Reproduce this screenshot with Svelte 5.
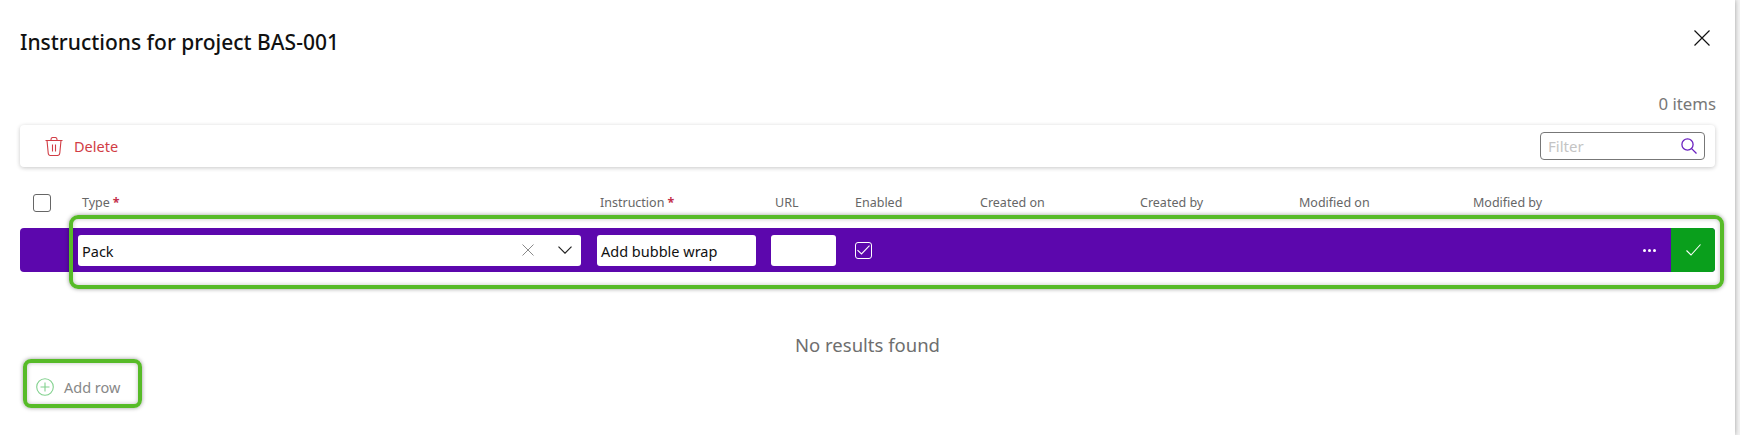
<script>
  const columns = [
    { label: 'Type', required: true },
    { label: 'Instruction', required: true },
    { label: 'URL' },
    { label: 'Enabled' },
    { label: 'Created on' },
    { label: 'Created by' },
    { label: 'Modified on' },
    { label: 'Modified by' }
  ]
</script>

<div class="dialog">
  <div class="title-row">
    <h1>Instructions for project BAS-001</h1>
    <svg class="close" width="16" height="16" viewBox="0 0 16 16" fill="none" stroke="#111" stroke-width="1.2">
      <path d="M.5.5l15 15M15.500.5l-15 15" />
    </svg>
  </div>

  <div class="count">0 items</div>

  <div class="toolbar">
    <svg class="trash" width="18" height="19" viewBox="0 0 18 19" fill="none" stroke="#d13d45" stroke-width="1.1">
      <path d="M.5 3.500h17M2 3.500l1.200 12.500a2.500 2.500 0 0 0 2.500 2.500h6.600a2.500 2.500 0 0 0 2.500-2.500L16 3.500M6 3.500V2.500a2 2 0 0 1 2-2h2a2 2 0 0 1 2 2v1M7.500 7.500v7M10.500 7.500v7" />
    </svg>
    <span class="delete">Delete</span>
    <div class="filter">
      <span>Filter</span>
      <svg width="16" height="16" viewBox="0 0 16 16" fill="none" stroke="#6b22c0" stroke-width="1.300">
        <circle cx="6.500" cy="6.500" r="5.600" />
        <path d="M10.600 10.600L15.500 15.500" />
      </svg>
    </div>
  </div>

  <div class="head">
    <div class="head-check"><span class="box"></span></div>
    {#each columns as col}
      <div class="col">{col.label}{#if col.required}<span class="star">*</span>{/if}</div>
    {/each}
  </div>

  <div class="row">
    <div class="input type">
      <span class="value">Pack</span>
      <svg class="clear" width="12" height="12" viewBox="0 0 12 12" fill="none" stroke="#8a8a8a" stroke-width="1">
        <path d="M.5.500l11 11M11.500.500l-11 11" />
      </svg>
      <svg class="chevron" width="14" height="8" viewBox="0 0 14 8" fill="none" stroke="#222" stroke-width="1.200">
        <path d="M.5.700L7 7.200 13.500.7" />
      </svg>
    </div>
    <div class="input instruction"><span class="value">Add bubble wrap</span></div>
    <div class="input url"></div>
    <div class="enabled">
      <svg width="13" height="10" viewBox="0 0 13 10" fill="none" stroke="#fff" stroke-width="1.100">
        <path d="M.5 5.200L4.500 9 12.500.6" />
      </svg>
    </div>
    <div class="dots">
      <i></i><i></i><i></i>
    </div>
    <div class="ok">
      <svg width="15" height="12" viewBox="0 0 15 12" fill="none" stroke="#fff" stroke-width="1.100">
        <path d="M.5 6.500L5 11 14.500.5" />
      </svg>
    </div>
    <div class="highlight"></div>
  </div>

  <div class="empty">No results found</div>

  <div class="add-row">
    <svg width="18" height="18" viewBox="0 0 18 18" fill="none" stroke="#82d18e" stroke-width="1.100">
      <circle cx="9" cy="9" r="8.300" />
      <path d="M9 4.500v9M4.500 9h9" />
    </svg>
    <span>Add row</span>
  </div>
</div>

<style>
  :global(body) {
    background: #f3f3f3;
    overflow: hidden;
  }
  .dialog {
    box-sizing: border-box;
    width: 1735px;
    height: 435px;
    padding: 0 20px 0 20px;
    background: #fff;
    box-shadow: 0 0 5px rgba(0, 0, 0, 0.35);
    font-family: "Noto Sans", "Open Sans", sans-serif;
    color: #111;
  }
  .title-row {
    display: flex;
    justify-content: space-between;
    align-items: center;
    height: 84px;
  }
  h1 {
    margin: 0;
    font-size: 21px;
    font-weight: 500;
    color: #111;
  }
  .close {
    margin-right: 5px;
    margin-top: -8px;
  }
  .count {
    height: 41px;
    margin-right: -1px;
    line-height: 40px;
    text-align: right;
    font-size: 16.800px;
    color: #777;
  }
  .toolbar {
    display: flex;
    align-items: center;
    height: 42px;
    padding: 0 10px 0 25px;
    border-radius: 4px;
    box-shadow: 0 1px 4px rgba(0, 0, 0, 0.22);
  }
  .delete {
    margin-left: 11px;
    font-size: 14.500px;
    color: #d13d45;
  }
  .filter {
    box-sizing: border-box;
    display: flex;
    align-items: center;
    justify-content: space-between;
    width: 165px;
    height: 28px;
    margin-left: auto;
    padding: 0 7px 0 7px;
    border: 1px solid #777;
    border-radius: 4px;
    font-size: 15px;
    color: #c4c4c4;
  }
  .head {
    display: grid;
    grid-template-columns: 62px 518px 175px 80px 125px 160px 159px 174px 1fr;
    align-items: center;
    height: 20px;
    margin-top: 26px;
    font-size: 12.500px;
    color: #666;
  }
  .head-check {
    padding-left: 13px;
    display: flex;
  }
  .col {
    margin-top: -1px;
  }
  .box {
    box-sizing: border-box;
    width: 18px;
    height: 18px;
    border: 1px solid #666;
    border-radius: 3px;
  }
  .star {
    margin-left: 3px;
    color: #c4314b;
    font-weight: 700;
  }
  .row {
    position: relative;
    display: flex;
    align-items: center;
    height: 44px;
    margin-top: 15px;
    padding-left: 58px;
    background: #5c07ad;
    border-radius: 4px;
  }
  .input {
    box-sizing: border-box;
    display: flex;
    align-items: center;
    height: 31px;
    background: #fff;
    border-radius: 3px;
    font-size: 14.500px;
    color: #111;
  }
  .value {
    margin-top: 1px;
  }
  .type {
    width: 503px;
    padding-left: 4px;
  }
  .clear {
    margin-left: auto;
    margin-right: 24px;
  }
  .chevron {
    margin-right: 9px;
  }
  .instruction {
    width: 159px;
    margin-left: 16px;
    padding-left: 4px;
  }
  .url {
    width: 65px;
    margin-left: 15px;
  }
  .enabled {
    box-sizing: border-box;
    display: flex;
    align-items: center;
    justify-content: center;
    width: 17px;
    height: 17px;
    margin-left: 19px;
    border: 1px solid #fff;
    border-radius: 3px;
  }
  .dots {
    display: flex;
    gap: 2px;
    margin-left: auto;
    margin-right: 15px;
  }
  .dots i {
    width: 3px;
    height: 3px;
    background: #fff;
    border-radius: 50%;
  }
  .ok {
    display: flex;
    align-items: center;
    justify-content: center;
    width: 44px;
    height: 44px;
    background: #0a9f1c;
    border-radius: 0 4px 4px 0;
  }
  .highlight {
    box-sizing: border-box;
    position: absolute;
    left: 49px;
    right: -9px;
    top: -13px;
    height: 74px;
    border: 4px solid #57bb28;
    border-radius: 9px;
    box-shadow: 0 0 4px rgba(0, 0, 0, 0.4), inset 0 0 4px rgba(0, 0, 0, 0.25);
    pointer-events: none;
  }
  .empty {
    margin-top: 61px;
    height: 24px;
    line-height: 24px;
    text-align: center;
    font-size: 18.500px;
    color: #6e6e6e;
  }
  .add-row {
    box-sizing: border-box;
    display: flex;
    align-items: center;
    gap: 10px;
    width: 119px;
    height: 49px;
    margin: 2px 0 0 3px;
    padding: 6px 0 0 9px;
    border: 4px solid #57bb28;
    border-radius: 8px;
    box-shadow: 0 0 4px rgba(0, 0, 0, 0.4), inset 0 0 4px rgba(0, 0, 0, 0.25);
    font-size: 14.500px;
    color: #888;
  }
</style>
